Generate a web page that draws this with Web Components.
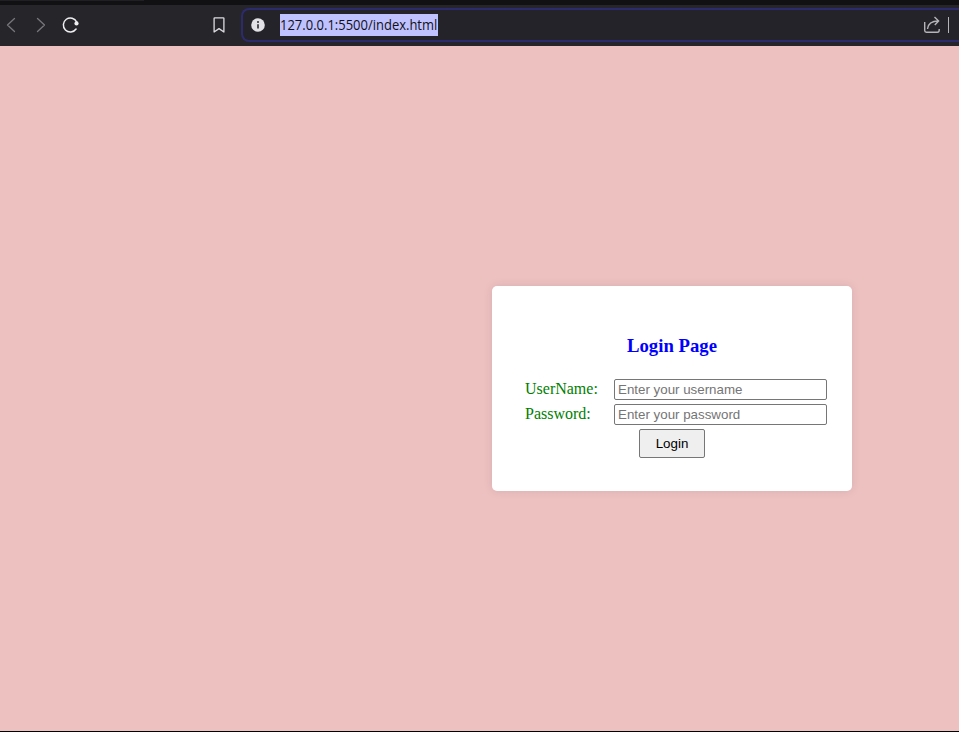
<!DOCTYPE html>
<html lang="en"><head><meta charset="utf-8"><title>Login Page</title>
<style>html,body{margin:0;height:100%;overflow:hidden}</style></head>
<body><browser-window><login-card></login-card></browser-window>
<script>
const define=(name,html)=>customElements.define(name,class extends HTMLElement{
  constructor(){super();this.attachShadow({mode:'open'}).innerHTML=html}
});
define('nav-icons',`<style>
:host{display:block;height:41px;width:241px;flex:none}svg{display:block}
</style><svg width="241" height="41" fill="none" stroke-linecap="round" stroke-linejoin="round">
<path d="M14.5 13.5L7.5 20L14.5 26.5M37.5 13.5L44.5 20L37.5 26.5" stroke="#77767b" stroke-width="1.3"/>
<path d="M76.7 17A7 7 0 1 0 76.1 24" stroke="#efeff2" stroke-width="1.5"/><circle cx="76.5" cy="18.4" r="2.1" fill="#efeff2"/>
<path d="M214.1 13.3Q214.1 12.8 214.7 12.8H223.3Q223.9 12.8 223.9 13.3V27L219 23.6L214.1 27Z" stroke="#dddce1" stroke-width="1.3"/>
</svg>`);
define('address-field',`<style>
:host{display:flex;box-sizing:border-box;flex:1;height:34px;margin-top:3px;border:2px solid #2c2b6c;border-right:0;border-radius:8px 0 0 8px;background:#242329;align-items:center;padding-left:8px}
.info{flex:none;margin-right:15px}
.url{font:14px/22px "Open Sans","Noto Sans",sans-serif;height:22px;width:158px;white-space:nowrap;background:#c0c2ff;color:#111119}
.url span{display:inline-block;transform:scaleX(.928);transform-origin:left}
.share{margin-left:auto;flex:none}
</style><svg class="info" width="14" height="14"><circle cx="7" cy="7" r="6.8" fill="#e2e1e6"/><circle cx="7" cy="4" r="1" fill="#29282e"/><path d="M7 6.3V10.5" stroke="#29282e" stroke-width="1.6"/></svg>
<div class="url"><span>127.0.0.1:5500/index.html</span></div>
<svg class="share" width="36" height="30" fill="none" stroke="#b5b4b9" stroke-width="1.4"><path d="M1.7 12V20.5Q1.7 22.2 3.4 22.2H14.5Q16.2 22.2 16.2 20V19M4.5 19C5 13.7 8 11 15.5 11M11.5 7L15.6 11L11.8 15"/><path d="M25.5 7V23" stroke-width="1"/></svg>`);
define('browser-window',`<style>
:host{display:flex;flex-direction:column;height:732px;width:959px;background:#000}
.tabs{height:5px;flex:none;background:#111113}.tab{width:144px;height:1px;background:#202024}
.bar{height:41px;flex:none;display:flex;background:#26252a}
.page{height:685px;flex:none;background:#eec1c1;display:flex;align-items:flex-start;box-sizing:border-box;padding:240px 0 0 492px}
</style><div class="tabs"><div class="tab"></div></div><div class="bar"><nav-icons></nav-icons><address-field></address-field></div><div class="page"><slot></slot></div>`);
define('form-row',`<style>
:host{display:flex;height:21px;margin-bottom:4px;align-items:flex-start}
label{width:89px;flex:none;font:16px/20px "Liberation Serif",serif;color:green}
input{box-sizing:border-box;width:213px;height:21px;margin:0;padding:1px 2px 1px 3px;border:1px solid #767676;border-radius:2px;font:13.333px "Liberation Sans",sans-serif;background:#fff}
input::placeholder{color:#757575;opacity:1}
</style><label><slot></slot></label><input>`);
class LoginCard extends HTMLElement{
  constructor(){super();this.attachShadow({mode:'open'}).innerHTML=`<style>
:host{display:block;box-sizing:border-box;width:360px;height:205px;padding:49px 25px 0 33px;background:#fff;border-radius:5px;box-shadow:0 0 10px rgba(0,0,0,.1)}
h3{margin:0 0 23px -8px;text-align:center;font:bold 18.72px/21px "Liberation Serif",serif;color:#00f}
button{display:block;box-sizing:border-box;width:66px;height:29px;margin:0 0 0 114px;padding:0;border:1px solid #767676;border-radius:2px;background:#efefef;font:13.333px "Liberation Sans",sans-serif;color:#000}
</style><h3>Login Page</h3><form-row>UserName:</form-row><form-row>Password:</form-row><button>Login</button>`;
    const names=['username','password'];
    this.shadowRoot.querySelectorAll('form-row').forEach((r,i)=>r.shadowRoot.querySelector('input').placeholder='Enter your '+names[i]);
  }
}
customElements.define('login-card',LoginCard);
</script></body></html>
